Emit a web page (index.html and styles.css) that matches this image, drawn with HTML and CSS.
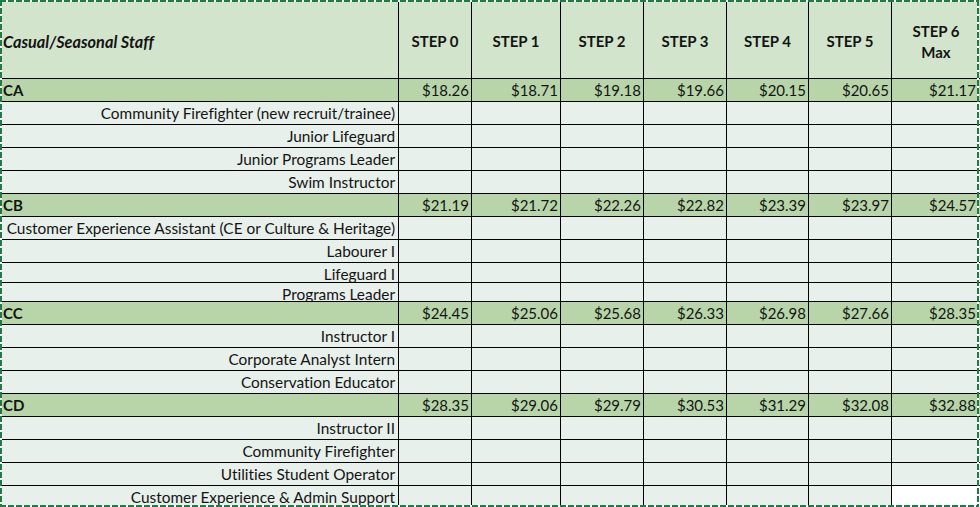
FILE: index.html
```html
<!DOCTYPE html>
<html>
<head>
<meta charset="utf-8">
<link rel="stylesheet" href="styles.css">
</head>
<body>
<div class="sheet">
  <div class="row head">
    <div class="c hd title">Casual/Seasonal Staff</div>
    <div class="c hd">STEP 0</div>
    <div class="c hd">STEP 1</div>
    <div class="c hd">STEP 2</div>
    <div class="c hd">STEP 3</div>
    <div class="c hd">STEP 4</div>
    <div class="c hd">STEP 5</div>
    <div class="c hd two">STEP 6<br>Max</div>
  </div>

  <div class="row grp">
    <div class="c code">CA</div>
    <div class="c val">$18.26</div><div class="c val">$18.71</div><div class="c val">$19.18</div><div class="c val">$19.66</div><div class="c val">$20.15</div><div class="c val">$20.65</div><div class="c val last">$21.17</div>
  </div>
  <div class="row job"><div class="c lbl">Community Firefighter (new recruit/trainee)</div><div class="c"></div><div class="c"></div><div class="c"></div><div class="c"></div><div class="c"></div><div class="c"></div><div class="c"></div></div>
  <div class="row job"><div class="c lbl">Junior Lifeguard</div><div class="c"></div><div class="c"></div><div class="c"></div><div class="c"></div><div class="c"></div><div class="c"></div><div class="c"></div></div>
  <div class="row job"><div class="c lbl">Junior Programs Leader</div><div class="c"></div><div class="c"></div><div class="c"></div><div class="c"></div><div class="c"></div><div class="c"></div><div class="c"></div></div>
  <div class="row job"><div class="c lbl">Swim Instructor</div><div class="c"></div><div class="c"></div><div class="c"></div><div class="c"></div><div class="c"></div><div class="c"></div><div class="c"></div></div>

  <div class="row grp">
    <div class="c code">CB</div>
    <div class="c val">$21.19</div><div class="c val">$21.72</div><div class="c val">$22.26</div><div class="c val">$22.82</div><div class="c val">$23.39</div><div class="c val">$23.97</div><div class="c val last">$24.57</div>
  </div>
  <div class="row job"><div class="c lbl">Customer Experience Assistant (CE or Culture &amp; Heritage)</div><div class="c"></div><div class="c"></div><div class="c"></div><div class="c"></div><div class="c"></div><div class="c"></div><div class="c"></div></div>
  <div class="row job"><div class="c lbl">Labourer I</div><div class="c"></div><div class="c"></div><div class="c"></div><div class="c"></div><div class="c"></div><div class="c"></div><div class="c"></div></div>
  <div class="row job h20"><div class="c lbl">Lifeguard I</div><div class="c"></div><div class="c"></div><div class="c"></div><div class="c"></div><div class="c"></div><div class="c"></div><div class="c"></div></div>
  <div class="row job h19"><div class="c lbl">Programs Leader</div><div class="c"></div><div class="c"></div><div class="c"></div><div class="c"></div><div class="c"></div><div class="c"></div><div class="c"></div></div>

  <div class="row grp">
    <div class="c code">CC</div>
    <div class="c val">$24.45</div><div class="c val">$25.06</div><div class="c val">$25.68</div><div class="c val">$26.33</div><div class="c val">$26.98</div><div class="c val">$27.66</div><div class="c val last">$28.35</div>
  </div>
  <div class="row job"><div class="c lbl">Instructor I</div><div class="c"></div><div class="c"></div><div class="c"></div><div class="c"></div><div class="c"></div><div class="c"></div><div class="c"></div></div>
  <div class="row job"><div class="c lbl">Corporate Analyst Intern</div><div class="c"></div><div class="c"></div><div class="c"></div><div class="c"></div><div class="c"></div><div class="c"></div><div class="c"></div></div>
  <div class="row job"><div class="c lbl">Conservation Educator</div><div class="c"></div><div class="c"></div><div class="c"></div><div class="c"></div><div class="c"></div><div class="c"></div><div class="c"></div></div>

  <div class="row grp">
    <div class="c code">CD</div>
    <div class="c val">$28.35</div><div class="c val">$29.06</div><div class="c val">$29.79</div><div class="c val">$30.53</div><div class="c val">$31.29</div><div class="c val">$32.08</div><div class="c val last">$32.88</div>
  </div>
  <div class="row job"><div class="c lbl">Instructor II</div><div class="c"></div><div class="c"></div><div class="c"></div><div class="c"></div><div class="c"></div><div class="c"></div><div class="c"></div></div>
  <div class="row job"><div class="c lbl">Community Firefighter</div><div class="c"></div><div class="c"></div><div class="c"></div><div class="c"></div><div class="c"></div><div class="c"></div><div class="c"></div></div>
  <div class="row job"><div class="c lbl">Utilities Student Operator</div><div class="c"></div><div class="c"></div><div class="c"></div><div class="c"></div><div class="c"></div><div class="c"></div><div class="c"></div></div>
  <div class="row job"><div class="c lbl">Customer Experience &amp; Admin Support</div><div class="c"></div><div class="c"></div><div class="c"></div><div class="c"></div><div class="c"></div><div class="c"></div><div class="c blank"></div></div>

  <div class="ants"></div>
</div>
</body>
</html>
```
FILE: styles.css
```css
html, body {
  margin: 0;
  padding: 0;
  background: #ffffff;
}
.sheet {
  position: relative;
  width: 980px;
  height: 507px;
  overflow: hidden;
  font-family: "Lato", "Liberation Sans", sans-serif;
  font-size: 15px;
  font-variant-ligatures: none;
  color: #141414;
}
.row {
  display: grid;
  grid-template-columns: 399px 73px 89px 83px 83px 82px 83px 88px;
  height: 23px;
}
.row.head { height: 79px; background: #d3e4cc; }
.row.grp { background: #b7d5a9; }
.row.job { background: #e8f0eb; }
.row.h20 { height: 20px; }
.row.h19 { height: 19px; }
.c {
  box-sizing: border-box;
  border-right: 1px solid #000;
  border-bottom: 1px solid #000;
  overflow: hidden;
  white-space: nowrap;
  line-height: 18px;
  padding-top: 2px;
}
.c:last-child { border-right: none; }
.hd {
  display: flex;
  align-items: center;
  justify-content: center;
  text-align: center;
  font-weight: 700;
  padding-top: 5px;
  line-height: 21px;
}
.hd.title {
  justify-content: flex-start;
  font-style: italic;
  font-size: 16.3px;
  padding-left: 3px;
}
.code {
  font-weight: 700;
  padding-left: 3px;
}
.val {
  text-align: right;
  padding-right: 2px;
}
.val.last { padding-right: 4px; }
.lbl {
  text-align: right;
  padding-right: 3px;
  font-size: 15.4px;
}
.blank { background: #ffffff; }
.ants {
  position: absolute;
  left: 0;
  top: 0;
  right: 1px;
  bottom: 0;
  pointer-events: none;
  background:
    repeating-linear-gradient(90deg, #217a46 0 6px, #ffffff 6px 8px) left top / 100% 2px no-repeat,
    repeating-linear-gradient(90deg, #217a46 0 6px, #ffffff 6px 8px) left bottom / 100% 2px no-repeat,
    repeating-linear-gradient(180deg, #217a46 0 6px, #ffffff 6px 8px) left top / 2px 100% no-repeat,
    repeating-linear-gradient(180deg, #217a46 0 6px, #ffffff 6px 8px) right top / 2px 100% no-repeat;
}
```
